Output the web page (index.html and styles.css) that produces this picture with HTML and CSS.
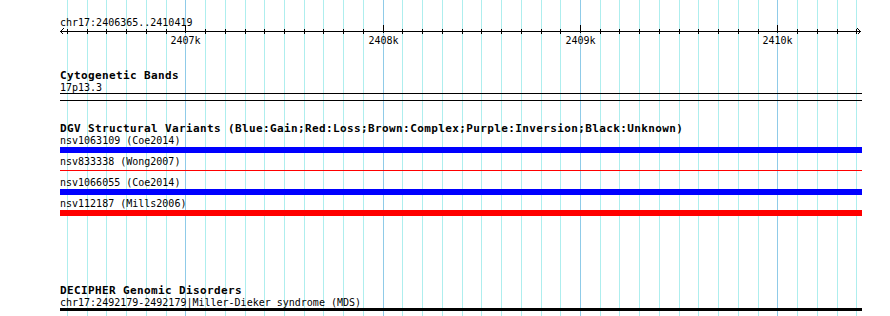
FILE: index.html
```html
<!DOCTYPE html>
<html lang="en">
<head>
<meta charset="utf-8">
<title>Genome browser panel</title>
<link rel="stylesheet" href="styles.css">
</head>
<body>
<div class="panel">
  <svg class="grid" width="890" height="316" viewBox="0 0 890 316" aria-hidden="true">
    <g class="grid-minor">
      <rect x="67" y="0" width="1" height="316"/><rect x="87" y="0" width="1" height="316"/>
      <rect x="106" y="0" width="1" height="316"/><rect x="126" y="0" width="1" height="316"/>
      <rect x="146" y="0" width="1" height="316"/><rect x="166" y="0" width="1" height="316"/>
      <rect x="205" y="0" width="1" height="316"/><rect x="225" y="0" width="1" height="316"/>
      <rect x="245" y="0" width="1" height="316"/><rect x="264" y="0" width="1" height="316"/>
      <rect x="284" y="0" width="1" height="316"/><rect x="304" y="0" width="1" height="316"/>
      <rect x="323" y="0" width="1" height="316"/><rect x="343" y="0" width="1" height="316"/>
      <rect x="363" y="0" width="1" height="316"/><rect x="402" y="0" width="1" height="316"/>
      <rect x="422" y="0" width="1" height="316"/><rect x="442" y="0" width="1" height="316"/>
      <rect x="462" y="0" width="1" height="316"/><rect x="481" y="0" width="1" height="316"/>
      <rect x="501" y="0" width="1" height="316"/><rect x="521" y="0" width="1" height="316"/>
      <rect x="541" y="0" width="1" height="316"/><rect x="560" y="0" width="1" height="316"/>
      <rect x="600" y="0" width="1" height="316"/><rect x="619" y="0" width="1" height="316"/>
      <rect x="639" y="0" width="1" height="316"/><rect x="659" y="0" width="1" height="316"/>
      <rect x="679" y="0" width="1" height="316"/><rect x="698" y="0" width="1" height="316"/>
      <rect x="718" y="0" width="1" height="316"/><rect x="738" y="0" width="1" height="316"/>
      <rect x="758" y="0" width="1" height="316"/><rect x="797" y="0" width="1" height="316"/>
      <rect x="817" y="0" width="1" height="316"/><rect x="837" y="0" width="1" height="316"/>
      <rect x="856" y="0" width="1" height="316"/>
    </g>
    <g class="grid-major">
      <rect x="185" y="0" width="1" height="316"/><rect x="383" y="0" width="1" height="316"/>
      <rect x="580" y="0" width="1" height="316"/><rect x="777" y="0" width="1" height="316"/>
    </g>
  </svg>

  <div class="ruler">
    <div class="ruler-label">chr17:2406365..2410419</div>
    <svg class="axis" width="890" height="18" viewBox="0 0 890 18">
      <rect class="ink" x="60" y="2" width="801" height="1"/>
      <path class="arrow" d="M63.5,-0.5 L60.5,2.5 L63.5,5.5"/>
      <path class="arrow" d="M857.5,-0.5 L860.5,2.5 L857.5,5.5"/>
      <g class="ink">
        <rect x="67" y="0" width="1" height="5"/><rect x="87" y="0" width="1" height="5"/>
        <rect x="106" y="0" width="1" height="5"/><rect x="126" y="0" width="1" height="5"/>
        <rect x="146" y="0" width="1" height="5"/><rect x="166" y="0" width="1" height="5"/>
        <rect x="205" y="0" width="1" height="5"/><rect x="225" y="0" width="1" height="5"/>
        <rect x="245" y="0" width="1" height="5"/><rect x="264" y="0" width="1" height="5"/>
        <rect x="284" y="0" width="1" height="5"/><rect x="304" y="0" width="1" height="5"/>
        <rect x="323" y="0" width="1" height="5"/><rect x="343" y="0" width="1" height="5"/>
        <rect x="363" y="0" width="1" height="5"/><rect x="402" y="0" width="1" height="5"/>
        <rect x="422" y="0" width="1" height="5"/><rect x="442" y="0" width="1" height="5"/>
        <rect x="462" y="0" width="1" height="5"/><rect x="481" y="0" width="1" height="5"/>
        <rect x="501" y="0" width="1" height="5"/><rect x="521" y="0" width="1" height="5"/>
        <rect x="541" y="0" width="1" height="5"/><rect x="560" y="0" width="1" height="5"/>
        <rect x="600" y="0" width="1" height="5"/><rect x="619" y="0" width="1" height="5"/>
        <rect x="639" y="0" width="1" height="5"/><rect x="659" y="0" width="1" height="5"/>
        <rect x="679" y="0" width="1" height="5"/><rect x="698" y="0" width="1" height="5"/>
        <rect x="718" y="0" width="1" height="5"/><rect x="738" y="0" width="1" height="5"/>
        <rect x="758" y="0" width="1" height="5"/><rect x="797" y="0" width="1" height="5"/>
        <rect x="817" y="0" width="1" height="5"/><rect x="837" y="0" width="1" height="5"/>
        <rect x="856" y="0" width="1" height="5"/>
        <rect x="185" y="-4" width="1" height="8"/><rect x="383" y="-4" width="1" height="8"/>
        <rect x="580" y="-4" width="1" height="8"/><rect x="777" y="-4" width="1" height="8"/>
      </g>
      <g class="tick-labels">
        <text x="185.5" y="15" text-anchor="middle">2407k</text>
        <text x="383.5" y="15" text-anchor="middle">2408k</text>
        <text x="580.5" y="15" text-anchor="middle">2409k</text>
        <text x="777.5" y="15" text-anchor="middle">2410k</text>
      </g>
    </svg>
  </div>

  <section class="track track-cyto">
    <h2 class="track-title">Cytogenetic Bands</h2>
    <div class="feature">
      <div class="feat-label">17p13.3</div>
      <div class="glyph band"></div>
    </div>
  </section>

  <section class="track track-dgv">
    <h2 class="track-title">DGV Structural Variants (Blue:Gain;Red:Loss;Brown:Complex;Purple:Inversion;Black:Unknown)</h2>
    <div class="feature">
      <div class="feat-label">nsv1063109 (Coe2014)</div>
      <div class="glyph bar gain"></div>
    </div>
    <div class="feature">
      <div class="feat-label">nsv833338 (Wong2007)</div>
      <div class="glyph slot"><div class="thin loss"></div></div>
    </div>
    <div class="feature">
      <div class="feat-label">nsv1066055 (Coe2014)</div>
      <div class="glyph bar gain"></div>
    </div>
    <div class="feature">
      <div class="feat-label">nsv112187 (Mills2006)</div>
      <div class="glyph bar loss"></div>
    </div>
  </section>

  <section class="track track-decipher">
    <h2 class="track-title">DECIPHER Genomic Disorders</h2>
    <div class="feature">
      <div class="feat-label">chr17:2492179-2492179|Miller-Dieker syndrome (MDS)</div>
      <div class="glyph disorder"></div>
    </div>
  </section>
</div>
</body>
</html>
```

FILE: styles.css
```css
html, body {
  margin: 0;
  padding: 0;
  background: #ffffff;
}

.panel {
  position: relative;
  width: 890px;
  height: 316px;
  overflow: hidden;
  display: flow-root;
  color: #000;
}

.grid {
  position: absolute;
  top: 0;
  left: 0;
  z-index: 0;
  shape-rendering: crispEdges;
}

.grid-minor { fill: #aeeeee; }
.grid-major { fill: #8fcbe8; }

.ruler,
.track {
  position: relative;
  z-index: 1;
}

.ruler-label {
  padding: 16px 0 0 60px;
  height: 13px;
  line-height: 13px;
  font-family: "DejaVu Sans Mono", monospace;
  font-size: 10px;
  white-space: pre;
}

.axis {
  display: block;
  overflow: visible;
  shape-rendering: crispEdges;
}

.ink { fill: #000; }

.arrow {
  fill: none;
  stroke: #000;
  stroke-width: 1;
}

.tick-labels text {
  font-family: "DejaVu Sans Mono", monospace;
  font-size: 10px;
  fill: #000;
}

.track {
  margin-left: 60px;
  width: 802px;
}

.track-cyto { padding-top: 22px; }
.track-dgv { padding-top: 21px; }
.track-decipher { padding-top: 65px; }

.track-title {
  margin: 0;
  height: 13px;
  line-height: 13px;
  font-family: "DejaVu Sans Mono", monospace;
  font-weight: bold;
  font-size: 11px;
  letter-spacing: 0.38px;
  white-space: pre;
}

.feat-label {
  height: 11px;
  line-height: 11px;
  font-family: "DejaVu Sans Mono", monospace;
  font-size: 10px;
  white-space: pre;
}

.track-dgv .feature { padding-bottom: 3px; }
.track-dgv .feat-label {
  height: 12px;
  line-height: 12px;
}

.band {
  box-sizing: border-box;
  height: 8px;
  border-top: 1px solid #000;
  border-bottom: 1px solid #000;
}

.bar { height: 6px; }
.slot { height: 6px; padding-top: 2px; box-sizing: border-box; }
.thin { height: 1px; }

.gain { background: #0000ff; }
.loss { background: #ff0000; }

.disorder {
  height: 3px;
  background: #000;
}
```
